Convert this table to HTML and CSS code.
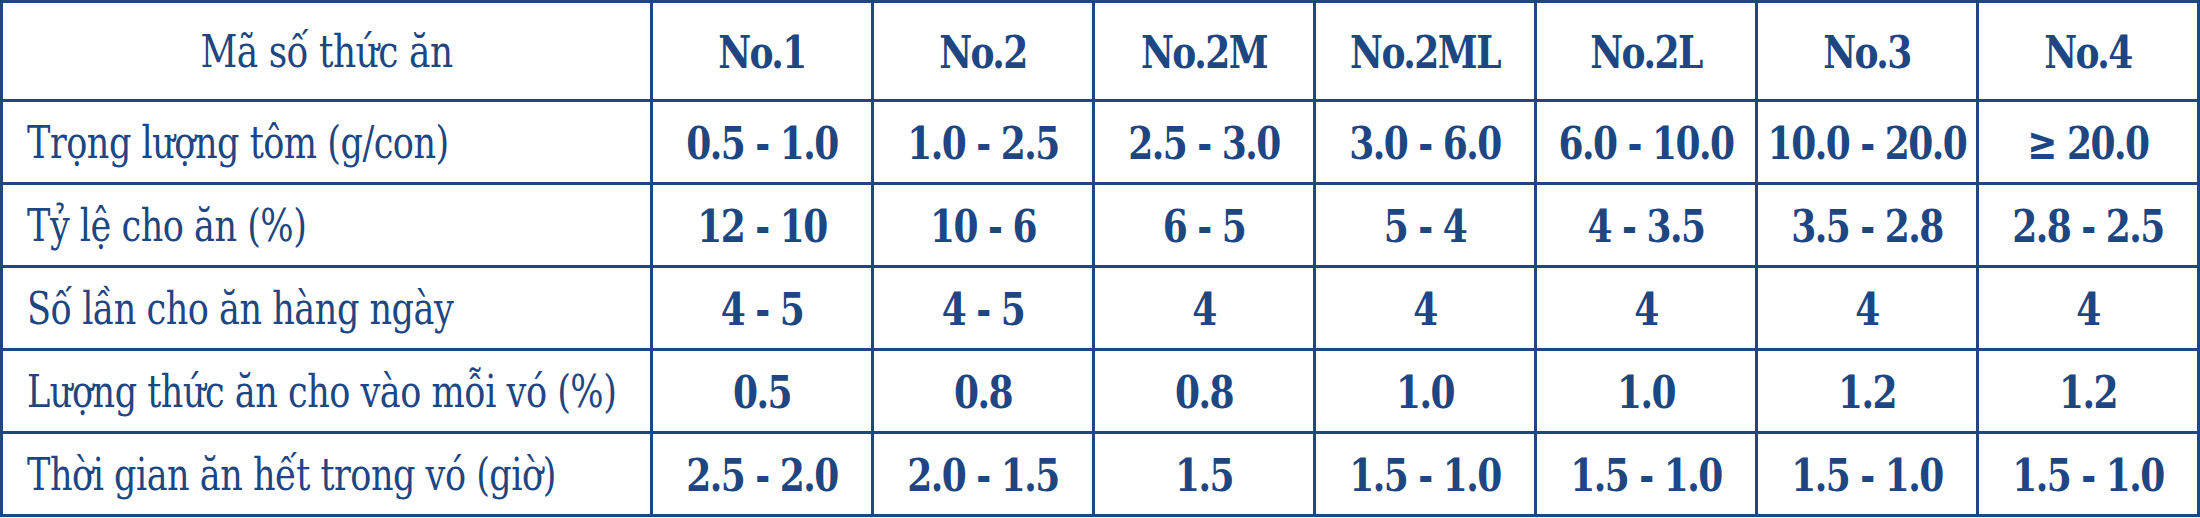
FILE: index.html
```html
<!DOCTYPE html>
<html lang="vi">
<head>
<meta charset="utf-8">
<title>Bảng cho ăn</title>
<link rel="stylesheet" href="styles.css">
</head>
<body>
<table class="feed">
  <colgroup>
    <col class="c-label">
    <col class="c-val"><col class="c-val"><col class="c-val"><col class="c-val"><col class="c-val"><col class="c-val"><col class="c-val">
  </colgroup>
  <thead>
    <tr class="head">
      <th class="corner"><span class="t">Mã số thức ăn</span></th>
      <th><span class="t">No.1</span></th><th><span class="t">No.2</span></th><th><span class="t">No.2M</span></th><th><span class="t">No.2ML</span></th><th><span class="t">No.2L</span></th><th><span class="t">No.3</span></th><th><span class="t">No.4</span></th>
    </tr>
  </thead>
  <tbody>
    <tr>
      <th class="label"><span class="t">Trọng lượng tôm (g/con)</span></th>
      <td><span class="t">0.5 - 1.0</span></td><td><span class="t">1.0 - 2.5</span></td><td><span class="t">2.5 - 3.0</span></td><td><span class="t">3.0 - 6.0</span></td><td><span class="t">6.0 - 10.0</span></td><td><span class="t">10.0 - 20.0</span></td><td><span class="t">≥ 20.0</span></td>
    </tr>
    <tr>
      <th class="label"><span class="t">Tỷ lệ cho ăn (%)</span></th>
      <td><span class="t">12 - 10</span></td><td><span class="t">10 - 6</span></td><td><span class="t">6 - 5</span></td><td><span class="t">5 - 4</span></td><td><span class="t">4 - 3.5</span></td><td><span class="t">3.5 - 2.8</span></td><td><span class="t">2.8 - 2.5</span></td>
    </tr>
    <tr>
      <th class="label"><span class="t">Số lần cho ăn hàng ngày</span></th>
      <td><span class="t">4 - 5</span></td><td><span class="t">4 - 5</span></td><td><span class="t">4</span></td><td><span class="t">4</span></td><td><span class="t">4</span></td><td><span class="t">4</span></td><td><span class="t">4</span></td>
    </tr>
    <tr>
      <th class="label"><span class="t">Lượng thức ăn cho vào mỗi vó (%)</span></th>
      <td><span class="t">0.5</span></td><td><span class="t">0.8</span></td><td><span class="t">0.8</span></td><td><span class="t">1.0</span></td><td><span class="t">1.0</span></td><td><span class="t">1.2</span></td><td><span class="t">1.2</span></td>
    </tr>
    <tr>
      <th class="label"><span class="t">Thời gian ăn hết trong vó (giờ)</span></th>
      <td><span class="t">2.5 - 2.0</span></td><td><span class="t">2.0 - 1.5</span></td><td><span class="t">1.5</span></td><td><span class="t">1.5 - 1.0</span></td><td><span class="t">1.5 - 1.0</span></td><td><span class="t">1.5 - 1.0</span></td><td><span class="t">1.5 - 1.0</span></td>
    </tr>
  </tbody>
</table>
</body>
</html>
```

FILE: styles.css
```css
html, body {
  margin: 0;
  padding: 0;
  background: #ffffff;
}

.feed {
  width: 2200px;
  border-collapse: collapse;
  table-layout: fixed;
  font-family: "DejaVu Serif Condensed", "DejaVu Serif", "Liberation Serif", serif;
  font-stretch: condensed;
  color: #1d4682;
}

.c-label { width: 650px; }
.c-val { width: 221px; }

.feed th,
.feed td {
  border: 3px solid #1d4682;
  padding: 0;
  text-align: center;
  vertical-align: middle;
  white-space: nowrap;
}

.t {
  display: inline-block;
  transform: scaleY(1.14);
}

.head th {
  height: 96px;
  font-size: 40px;
  font-weight: bold;
  letter-spacing: -1.5px;
}

.head th.corner {
  font-weight: normal;
  letter-spacing: -0.5px;
}

.feed tbody tr {
  height: 83px;
}

.feed td {
  font-size: 40px;
  font-weight: bold;
  letter-spacing: -1.5px;
}

.feed th.label {
  text-align: left;
  padding-left: 24px;
  font-size: 39px;
  font-weight: normal;
  letter-spacing: -0.5px;
}
```
